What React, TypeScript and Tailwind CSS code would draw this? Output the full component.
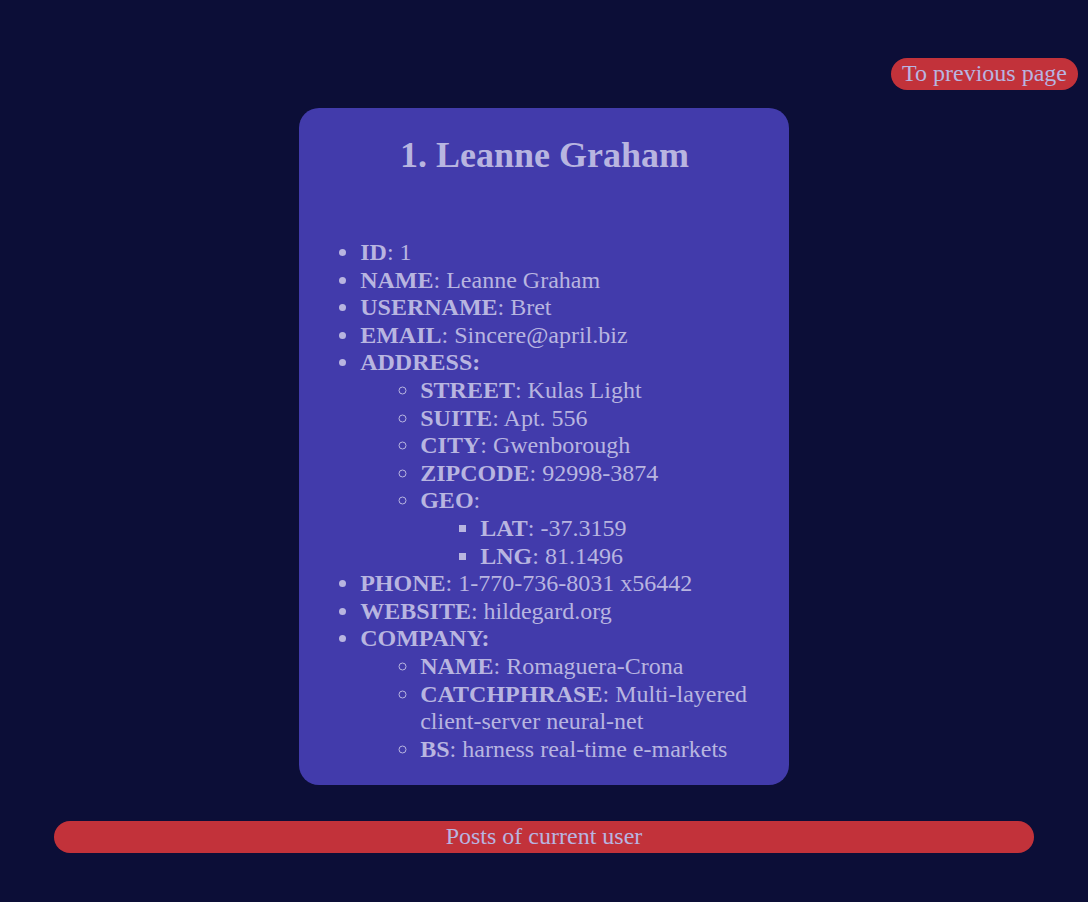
const user = {
	id: 1,
	name: "Leanne Graham",
	username: "Bret",
	email: "Sincere@april.biz",
	address: {
		street: "Kulas Light",
		suite: "Apt. 556",
		city: "Gwenborough",
		zipcode: "92998-3874",
		geo: { lat: "-37.3159", lng: "81.1496" },
	},
	phone: "1-770-736-8031 x56442",
	website: "hildegard.org",
	company: {
		name: "Romaguera-Crona",
		catchPhrase: "Multi-layered client-server neural-net",
		bs: "harness real-time e-markets",
	},
};

const Row = ({ label, value }: { label: string; value: string | number }) => (
	<li>
		<b>{label}</b>: {value}
	</li>
);

export default function App() {
	return (
		<div
			className="min-h-[902px] bg-[#0c0e37] text-[#b8b5e0] text-[24px] leading-[27.6px]"
			style={{ fontFamily: '"Liberation Serif", "Times New Roman", serif' }}
		>
			<div className="flex justify-end pt-[58px] pr-[10px]">
				<button className="rounded-full bg-[#c2323a] px-[11px] py-[2px] text-[#b8b5e0]">
					To previous page
				</button>
			</div>

			<div className="mx-auto mt-[18px] w-[45%] rounded-[20px] bg-[#423bab] pt-[27px] pb-[22px] pl-[21px] pr-[20px]">
				<h2 className="text-center text-[36px] leading-[41.4px] font-bold">
					{user.id}. {user.name}
				</h2>

				<ul className="mt-[63px] list-disc pl-10">
					<Row label="ID" value={user.id} />
					<Row label="NAME" value={user.name} />
					<Row label="USERNAME" value={user.username} />
					<Row label="EMAIL" value={user.email} />
					<li>
						<b>ADDRESS:</b>
						<ul className="list-[circle] pl-[60px]">
							<Row label="STREET" value={user.address.street} />
							<Row label="SUITE" value={user.address.suite} />
							<Row label="CITY" value={user.address.city} />
							<Row label="ZIPCODE" value={user.address.zipcode} />
							<li>
								<b>GEO</b>:
								<ul className="list-[square] pl-[60px]">
									<Row label="LAT" value={user.address.geo.lat} />
									<Row label="LNG" value={user.address.geo.lng} />
								</ul>
							</li>
						</ul>
					</li>
					<Row label="PHONE" value={user.phone} />
					<Row label="WEBSITE" value={user.website} />
					<li>
						<b>COMPANY:</b>
						<ul className="list-[circle] pl-[60px]">
							<Row label="NAME" value={user.company.name} />
							<Row label="CATCHPHRASE" value={user.company.catchPhrase} />
							<Row label="BS" value={user.company.bs} />
						</ul>
					</li>
				</ul>
			</div>

			<div className="mt-[36px] flex justify-center">
				<button className="w-[90%] rounded-full bg-[#c2323a] py-[2px] text-[#b8b5e0]">
					Posts of current user
				</button>
			</div>
		</div>
	);
}
